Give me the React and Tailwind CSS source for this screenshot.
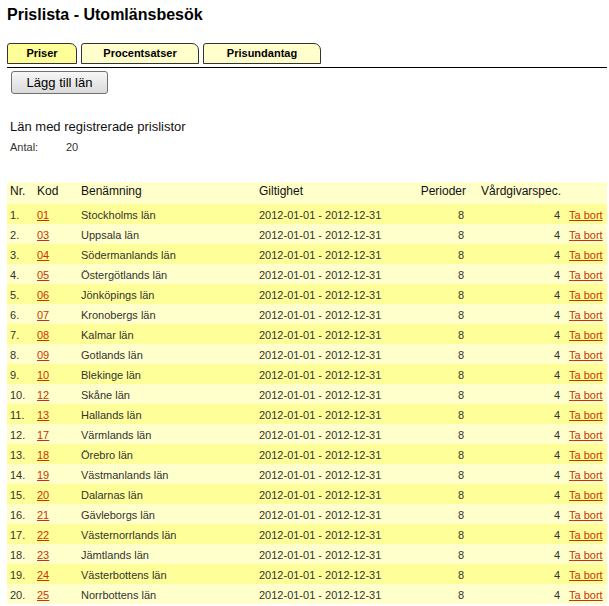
import React from 'react'

const lan = [
  ['01', 'Stockholms län'],
  ['03', 'Uppsala län'],
  ['04', 'Södermanlands län'],
  ['05', 'Östergötlands län'],
  ['06', 'Jönköpings län'],
  ['07', 'Kronobergs län'],
  ['08', 'Kalmar län'],
  ['09', 'Gotlands län'],
  ['10', 'Blekinge län'],
  ['12', 'Skåne län'],
  ['13', 'Hallands län'],
  ['17', 'Värmlands län'],
  ['18', 'Örebro län'],
  ['19', 'Västmanlands län'],
  ['20', 'Dalarnas län'],
  ['21', 'Gävleborgs län'],
  ['22', 'Västernorrlands län'],
  ['23', 'Jämtlands län'],
  ['24', 'Västerbottens län'],
  ['25', 'Norrbottens län'],
]

function Tab({ label, active, width }) {
  return (
    <div
      className={`${width} h-[21px] border border-[#333] rounded-tl-[3px] rounded-tr-[7px] flex items-center justify-center text-[11px] font-bold text-black leading-none ${active ? 'bg-[#ffff99]' : 'bg-[#ffffcc]'}`}
    >
      {label}
    </div>
  )
}

export default function App() {
  return (
    <div className="w-[609px] h-[606px] bg-white overflow-hidden font-['Liberation_Sans',Arial,sans-serif] text-black">
      <h1 className="ml-[7px] mt-[6px] text-[16px] leading-[18px] font-bold">Prislista - Utomlänsbesök</h1>

      {/* flikar */}
      <div className="mt-[19px] ml-[7px] flex gap-[4px]">
        <Tab label="Priser" active width="w-[70px]" />
        <Tab label="Procentsatser" width="w-[118px]" />
        <Tab label="Prisundantag" width="w-[118px]" />
      </div>
      <div className="mt-[3px] ml-[7px] mr-[2px] h-px bg-black" />

      <button className="mt-[3px] ml-[11px] w-[97px] h-[23px] border border-[#707070] rounded-[3px] bg-gradient-to-b from-[#f7f7f7] to-[#dadada] text-[13px] leading-none text-black">
        Lägg till län
      </button>

      <div className="mt-[25px] ml-[10px] text-[13px] leading-[15px] text-[#111]">Län med registrerade prislistor</div>
      <div className="mt-[7px] ml-[10px] flex text-[11px] leading-[13px] text-[#333]">
        <span className="w-[56px]">Antal:</span>
        <span>20</span>
      </div>

      <table className="mt-[28px] ml-[7px] w-[600px] table-fixed border-collapse">
        <colgroup>
          <col className="w-[27px]" />
          <col className="w-[44px]" />
          <col className="w-[178px]" />
          <col className="w-[154px]" />
          <col className="w-[58px]" />
          <col className="w-[96px]" />
          <col className="w-[43px]" />
        </colgroup>
        <thead>
          <tr className="h-[22px] bg-[#ffffcc] text-[12px] leading-[14px] text-[#111]">
            <th className="align-top pt-[2px] pl-[3px] text-left font-normal">Nr.</th>
            <th className="align-top pt-[2px] pl-[3px] text-left font-normal">Kod</th>
            <th className="align-top pt-[2px] pl-[3px] text-left font-normal">Benämning</th>
            <th className="align-top pt-[2px] pl-[3px] text-left font-normal">Giltighet</th>
            <th className="align-top pt-[2px] pr-[2px] text-right font-normal">Perioder</th>
            <th className="align-top pt-[2px] pr-[3px] text-right font-normal whitespace-nowrap">Vårdgivarspec.</th>
            <th />
          </tr>
        </thead>
        <tbody>
          {lan.map(([kod, namn], i) => (
            <tr key={kod} className={`h-[20px] text-[11px] leading-[13px] text-[#333] ${i % 2 === 0 ? 'bg-[#ffff99]' : 'bg-[#ffffcc]'}`}>
              <td className="align-top pt-[5px] pl-[3px]">{i + 1}.</td>
              <td className="align-top pt-[5px] pl-[3px]">
                <a href="#" className="text-[#cc3300] underline">{kod}</a>
              </td>
              <td className="align-top pt-[5px] pl-[3px] whitespace-nowrap">{namn}</td>
              <td className="align-top pt-[5px] pl-[3px] whitespace-nowrap">2012-01-01 - 2012-12-31</td>
              <td className="align-top pt-[5px] pr-[4px] text-right">8</td>
              <td className="align-top pt-[5px] pr-[4px] text-right">4</td>
              <td className="align-top pt-[5px] pl-[5px] whitespace-nowrap">
                <a href="#" className="text-[#cc3300] underline">Ta bort</a>
              </td>
            </tr>
          ))}
        </tbody>
      </table>
    </div>
  )
}
